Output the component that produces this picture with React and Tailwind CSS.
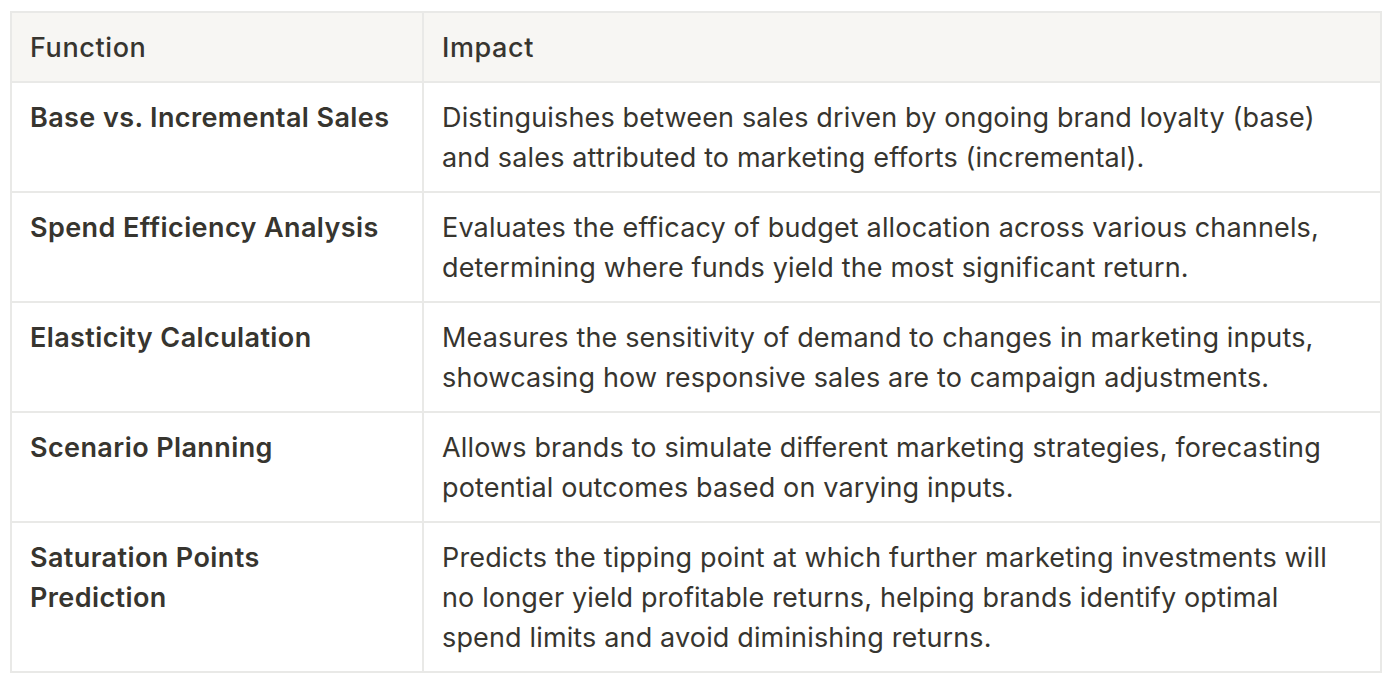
export default function App() {
  const rows = [
    ["Base vs. Incremental Sales", "Distinguishes between sales driven by ongoing brand loyalty (base) and sales attributed to marketing efforts (incremental)."],
    ["Spend Efficiency Analysis", "Evaluates the efficacy of budget allocation across various channels, determining where funds yield the most significant return."],
    ["Elasticity Calculation", "Measures the sensitivity of demand to changes in marketing inputs, showcasing how responsive sales are to campaign adjustments."],
    ["Scenario Planning", "Allows brands to simulate different marketing strategies, forecasting potential outcomes based on varying inputs."],
    ["Saturation Points Prediction", "Predicts the tipping point at which further marketing investments will no longer yield profitable returns, helping brands identify optimal spend limits and avoid diminishing returns."],
  ];
  return (
    <div className="w-[1394px] h-[684px] bg-white pt-[11px] pl-[10px]" style={{ fontFamily: "Inter, 'Noto Sans', sans-serif" }}>
      <div className="w-[1372px] border-2 border-[#e9e9e7] text-[#37352f] text-[27px] leading-[40px] tracking-[0.15px]">
        <div className="flex bg-[#f7f6f3]">
          <div className="w-[410px] shrink-0 pl-[18px] pr-[24px] pt-[15px] pb-[13px] font-medium tracking-[0.6px]">Function</div>
          <div className="flex-1 border-l-2 border-[#e9e9e7] px-[18px] pt-[15px] pb-[13px] font-medium tracking-[0.6px]">Impact</div>
        </div>
        {rows.map(([f, i]) => (
          <div key={f} className="flex border-t-2 border-[#e9e9e7]">
            <div className="w-[410px] shrink-0 pl-[18px] pr-[24px] pt-[15px] pb-[13px] font-semibold tracking-[0.4px]">{f}</div>
            <div className="flex-1 border-l-2 border-[#e9e9e7] px-[18px] pt-[15px] pb-[13px]">{i}</div>
          </div>
        ))}
      </div>
    </div>
  );
}
